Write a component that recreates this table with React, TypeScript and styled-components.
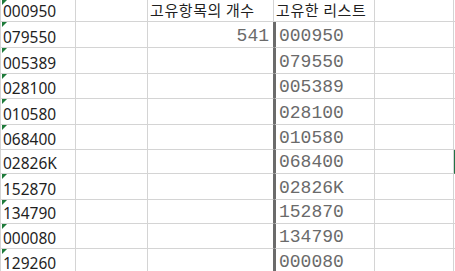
import React from "react";
import styled, { createGlobalStyle } from "styled-components";

const Global = createGlobalStyle`
  html, body { margin: 0; padding: 0; background: #ffffff; overflow: hidden; }
  #root { width: 455px; height: 271px; overflow: hidden; }
`;

const Sheet = styled.div`
  display: grid;
  grid-template-columns: 75px 72px 126px 101px 79px 1fr;
  grid-template-rows: 22px 26px 26px 25px 26px 25px 24px 26px 24px 25px 25px;
  width: 455px;
  height: 271px;
  overflow: hidden;
  border-left: 1px solid #d4d4d4;
  box-sizing: border-box;
`;

type CellProps = {
  $kind?: "text" | "mono" | "head" | "empty";
  $align?: "left" | "right";
  $thickLeft?: boolean;
  $thickRight?: boolean;
  $select?: boolean;
};

const Cell = styled.div<CellProps>`
  position: relative;
  box-sizing: border-box;
  border-right: 1px solid ${(p) => (p.$thickRight ? "#6b6b6b" : "#d4d4d4")};
  border-bottom: 1px solid #d4d4d4;
  border-left: ${(p) =>
    p.$thickLeft ? "2px solid #6b6b6b" : p.$select ? "2px solid #217346" : "none"};
  display: flex;
  align-items: flex-end;
  justify-content: ${(p) => (p.$align === "right" ? "flex-end" : "flex-start")};
  padding: 0 ${(p) => (p.$align === "right" ? "4px" : "0")}
    ${(p) => (p.$kind === "mono" ? "1px" : "0px")}
    ${(p) => (p.$kind === "mono" ? "3px" : "2px")};
  white-space: nowrap;
  overflow: visible;
  font-family: ${(p) =>
    p.$kind === "mono"
      ? '"Liberation Mono", "Courier New", monospace'
      : '"Noto Sans", "Noto Sans CJK KR", sans-serif'};
  font-size: ${(p) => (p.$kind === "mono" ? "18px" : "15.5px")};
  line-height: 20px;
  color: ${(p) => (p.$kind === "mono" ? "#6a6a6a" : "#1f1f1f")};
`;

const HeadText = styled.span`
  font-family: "Noto Sans CJK KR", "Noto Sans", sans-serif;
  font-size: 15px;
  color: #1f1f1f;
  letter-spacing: 0.6px;
  padding-bottom: 1px;
`;

const Flag = styled.span`
  position: absolute;
  top: 0;
  left: 1px;
  width: 0;
  height: 0;
  border-top: 5px solid #1e7b3a;
  border-right: 5px solid transparent;
`;

const colA = [
  "000950",
  "079550",
  "005389",
  "028100",
  "010580",
  "068400",
  "02826K",
  "152870",
  "134790",
  "000080",
  "129260",
];

const colD = [
  "000950",
  "079550",
  "005389",
  "028100",
  "010580",
  "068400",
  "02826K",
  "152870",
  "134790",
  "000080",
];

export default function App() {
  return (
    <>
      <Global />
      <Sheet>
        {colA.map((a, i) => {
          const isText = /[A-Z]/.test(a);
          return (
            <React.Fragment key={i}>
              <Cell $kind="text">
                {!isText && <Flag />}
                {a}
              </Cell>
              <Cell $kind="empty" />
              {i === 0 ? (
                <Cell $kind="head">
                  <HeadText>고유항목의 개수</HeadText>
                </Cell>
              ) : (
                <Cell $kind="mono" $align="right" $thickRight>
                  {i === 1 ? "541" : ""}
                </Cell>
              )}
              {i === 0 ? (
                <Cell $kind="head">
                  <HeadText>고유한 리스트</HeadText>
                </Cell>
              ) : (
                <Cell $kind="mono" $thickLeft>
                  {colD[i - 1]}
                </Cell>
              )}
              <Cell $kind="empty" />
              <Cell $kind="empty" $select={i === 6} />
            </React.Fragment>
          );
        })}
      </Sheet>
    </>
  );
}
